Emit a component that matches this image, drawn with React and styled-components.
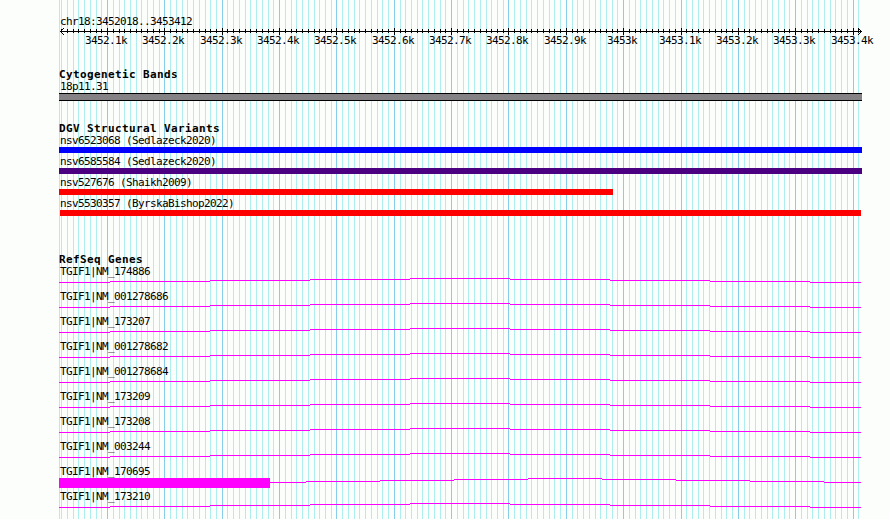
import styled, { createGlobalStyle } from 'styled-components';

const GlobalStyle = createGlobalStyle`
    body {
        margin: 0;
        background-color: #FCFEFC;
    }
`

const Browser = styled.div`
    position: relative;
    box-sizing: border-box;
    width: 890px;
    height: 519px;
    padding: 15px 0 0 59px;
    overflow: hidden;
    background-color: #FCFEFC;
    color: #000000;
    font-family: "DejaVu Sans Mono", "Liberation Mono", monospace;
    font-size: 11px;
    line-height: 14px;
`

const GridLayer = styled.svg`
    position: absolute;
    top: 0;
    left: 0;
`

const Content = styled.div`
    position: relative;
    display: flex;
    flex-direction: column;
`

const Label = styled.div`
    height: ${({ $height }) => $height || 12}px;
    padding-left: 1px;
    letter-spacing: -0.622px;
    white-space: pre;
`

const RulerSvg = styled.svg`
    display: block;
    width: 831px;
    height: 23px;
`

const RulerText = styled.text`
    font-size: 11px;
    letter-spacing: -0.622px;
`

const Track = styled.section`
    display: flex;
    flex-direction: column;
    margin-top: ${({ $space }) => $space}px;
`

const Title = styled.h2`
    height: 12px;
    margin: 0;
    font-size: 11px;
    font-weight: 700;
    letter-spacing: 0.378px;
    white-space: pre;
`

const Rows = styled.div`
    display: flex;
    flex-direction: column;
    gap: ${({ $gap }) => $gap || 0}px;
`

const Band = styled.div`
    box-sizing: border-box;
    width: 803px;
    height: 8px;
    border-top: 1px solid #000000;
    border-bottom: 1px solid #000000;
    background-color: #848284;
`

const Variant = styled.div`
    width: ${({ $width }) => $width}px;
    height: 6px;
    margin-left: ${({ $offset }) => $offset || 0}px;
    background-color: ${({ $color }) => $color};
`

const GeneSvg = styled.svg`
    display: block;
    width: 803px;
    height: 13px;
`

const LEFT = 59;

// base position (offset from 3450000) to pixel column
const toX = (pos) => Math.floor(59.95 + (pos - 2017) * 0.57348);

const positions = [];
for (let pos = 2020; pos <= 3410; pos += 10) {
    positions.push({ pos, x: toX(pos), major: pos % 100 === 0 });
}

const variants = [
    { name: 'nsv6523068 (Sedlazeck2020)', color: '#0000FF', width: 803 },
    { name: 'nsv6585584 (Sedlazeck2020)', color: '#4B0082', width: 803 },
    { name: 'nsv527676 (Shaikh2009)', color: '#FF0000', width: 554 },
    { name: 'nsv5530357 (ByrskaBishop2022)', color: '#FF0000', width: 801, offset: 1 },
];

const intron = [59, 110, 210, 310, 410, 510, 610, 710, 810, 861];
const shortIntron = [270, 306, 380, 454, 528, 602, 676, 750, 824, 861];

const genes = [
    'NM_174886',
    'NM_001278686',
    'NM_173207',
    'NM_001278682',
    'NM_001278684',
    'NM_173209',
    'NM_173208',
    'NM_003244',
    'NM_170695',
    'NM_173210',
];

function Grid() {
    return (
        <GridLayer width="890" height="519" shapeRendering="crispEdges">
            <rect x={LEFT} y="0" width="1" height="519" fill="#AFEEEE" />
            {positions.map(({ pos, x, major }) => (
                <rect key={pos} x={x} y="0" width="1" height="519" fill={major ? '#87CEEB' : '#AFEEEE'} />
            ))}
        </GridLayer>
    );
}

function Ruler() {
    return (
        <RulerSvg>
            <g shapeRendering="crispEdges">
                <rect x="1" y="4" width="802" height="1" />
                {[1, 2, 3].map((d) => (
                    <g key={d}>
                        <rect x={1 + d} y={4 - d} width="1" height="1" />
                        <rect x={1 + d} y={4 + d} width="1" height="1" />
                        <rect x={802 - d} y={4 - d} width="1" height="1" />
                        <rect x={802 - d} y={4 + d} width="1" height="1" />
                    </g>
                ))}
                {positions.map(({ pos, x, major }) => (
                    <rect key={pos} x={x - LEFT} y={major ? 1 : 2} width="1" height={major ? 7 : 4} />
                ))}
            </g>
            {positions.filter(({ major }) => major).map(({ pos, x }) => {
                const text = `${(3450000 + pos) / 1000}k`;
                return (
                    <RulerText key={pos} x={x - LEFT - text.length * 3 - 1} y="17">{text}</RulerText>
                );
            })}
        </RulerSvg>
    );
}

function Gene({ name }) {
    const hasExon = name === 'NM_170695';
    const steps = hasExon ? shortIntron : intron;

    return (
        <div>
            <Label>TGIF1|{name}</Label>
            <GeneSvg fill="#FF00FF" shapeRendering="crispEdges">
                {hasExon && <rect x="0" y="1" width="211" height="10" />}
                {steps.slice(0, -1).map((x, i) => (
                    <rect key={x} x={x - LEFT} y={1 + Math.abs(4 - i)} width={steps[i + 1] - x} height="1" />
                ))}
            </GeneSvg>
        </div>
    );
}

function App() {
    return (
        <>
            <GlobalStyle />
            <Browser>
                <Grid />
                <Content>
                    <Label>chr18:3452018..3453412</Label>
                    <Ruler />
                    <Track $space={18}>
                        <Title>Cytogenetic Bands</Title>
                        <Label $height={13}>18p11.31</Label>
                        <Band />
                    </Track>
                    <Track $space={21}>
                        <Title>DGV Structural Variants</Title>
                        <Rows $gap={2}>
                            {variants.map(({ name, color, width, offset }) => (
                                <div key={name}>
                                    <Label $height={13}>{name}</Label>
                                    <Variant $color={color} $width={width} $offset={offset} />
                                </div>
                            ))}
                        </Rows>
                    </Track>
                    <Track $space={37}>
                        <Title>RefSeq Genes</Title>
                        <Rows>
                            {genes.map((name) => (
                                <Gene key={name} name={name} />
                            ))}
                        </Rows>
                    </Track>
                </Content>
            </Browser>
        </>
    );
}

export default App;
